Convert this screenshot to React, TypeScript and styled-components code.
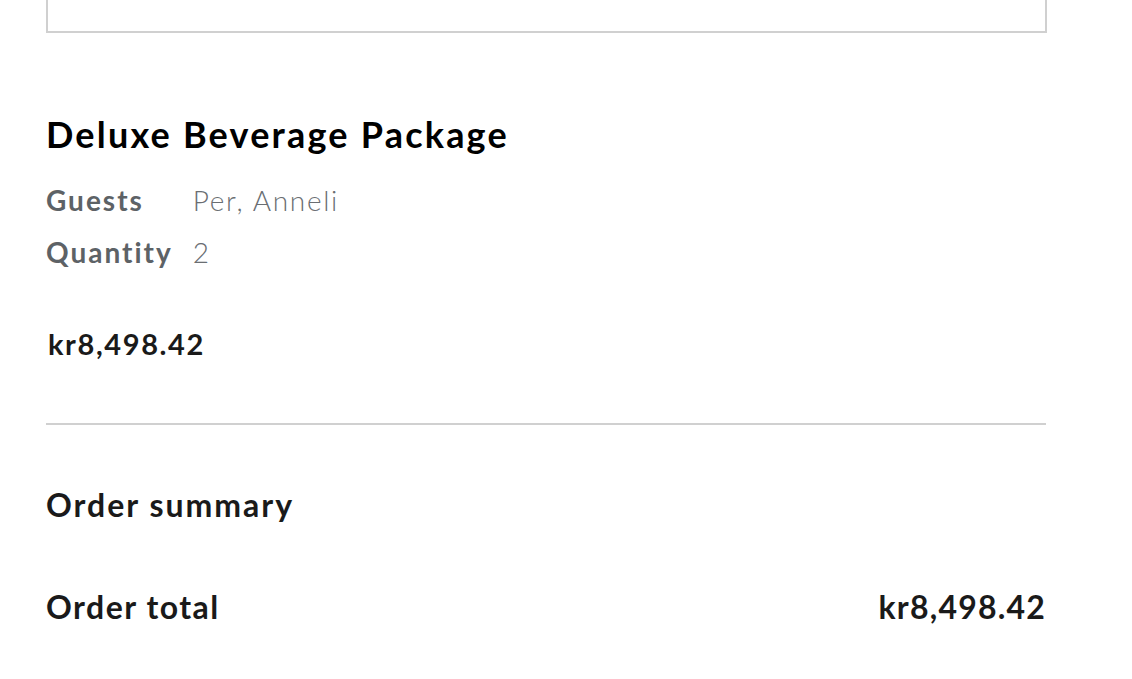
import React from 'react'
import styled, { createGlobalStyle } from 'styled-components'

const Global = createGlobalStyle`
  html, body {
    margin: 0;
    padding: 0;
    background: #ffffff;
  }
  body {
    font-family: Lato, "Open Sans", sans-serif;
    color: #111;
  }
`

const App = () => {
  return (
    <Page>
      <Global />
      <TopBox />
      <Item>
        <Title>Deluxe Beverage Package</Title>
        <Details>
          <Label>Guests</Label>
          <Value>Per, Anneli</Value>
          <Label>Quantity</Label>
          <Value>2</Value>
        </Details>
        <Price>kr8,498.42</Price>
      </Item>
      <Divider />
      <Summary>
        <SummaryTitle>Order summary</SummaryTitle>
        <TotalRow>
          <TotalLabel>Order total</TotalLabel>
          <TotalValue>kr8,498.42</TotalValue>
        </TotalRow>
      </Summary>
    </Page>
  )
}

export default App

const Page = styled.div`
  width: 1001px;
  margin-left: 46px;
  height: 679px;
  overflow: hidden;
`
const TopBox = styled.div`
  height: 31px;
  border: 2px solid #d0d0d0;
  border-top: none;
`
const Item = styled.div`
  padding-top: 79px;
`
const Title = styled.h2`
  margin: 0;
  font-size: 36px;
  font-weight: 700;
  color: #000;
  line-height: 44px;
  letter-spacing: 2.2px;
`
const Details = styled.div`
  display: grid;
  grid-template-columns: auto 1fr;
  column-gap: 20px;
  row-gap: 8px;
  margin-top: 22px;
  font-size: 28px;
  line-height: 44px;
`
const Label = styled.div`
  font-weight: 700;
  color: #5d6266;
  letter-spacing: 2px;
`
const Value = styled.div`
  font-weight: 300;
  color: #6a6e72;
  letter-spacing: 1.7px;
`
const Price = styled.div`
  margin-top: 52px;
  margin-left: 2px;
  font-size: 29px;
  font-weight: 700;
  color: #1a1a1a;
  letter-spacing: 1.6px;
`
const Divider = styled.hr`
  margin: 62px 0 0;
  border: none;
  border-top: 2px solid #d0d0d0;
  width: 1000px;
`
const Summary = styled.div`
  padding-top: 60px;
`
const SummaryTitle = styled.h3`
  margin: 0;
  font-size: 32px;
  font-weight: 700;
  color: #1a1a1a;
  letter-spacing: 2px;
`
const TotalRow = styled.div`
  display: flex;
  justify-content: space-between;
  align-items: baseline;
  margin-top: 63px;
  width: 999px;
`
const TotalLabel = styled.div`
  font-size: 32px;
  font-weight: 700;
  color: #1a1a1a;
  letter-spacing: 1.5px;
`
const TotalValue = styled.div`
  font-size: 32px;
  font-weight: 700;
  color: #1a1a1a;
  letter-spacing: 1.2px;
  margin-right: -1px;
`
